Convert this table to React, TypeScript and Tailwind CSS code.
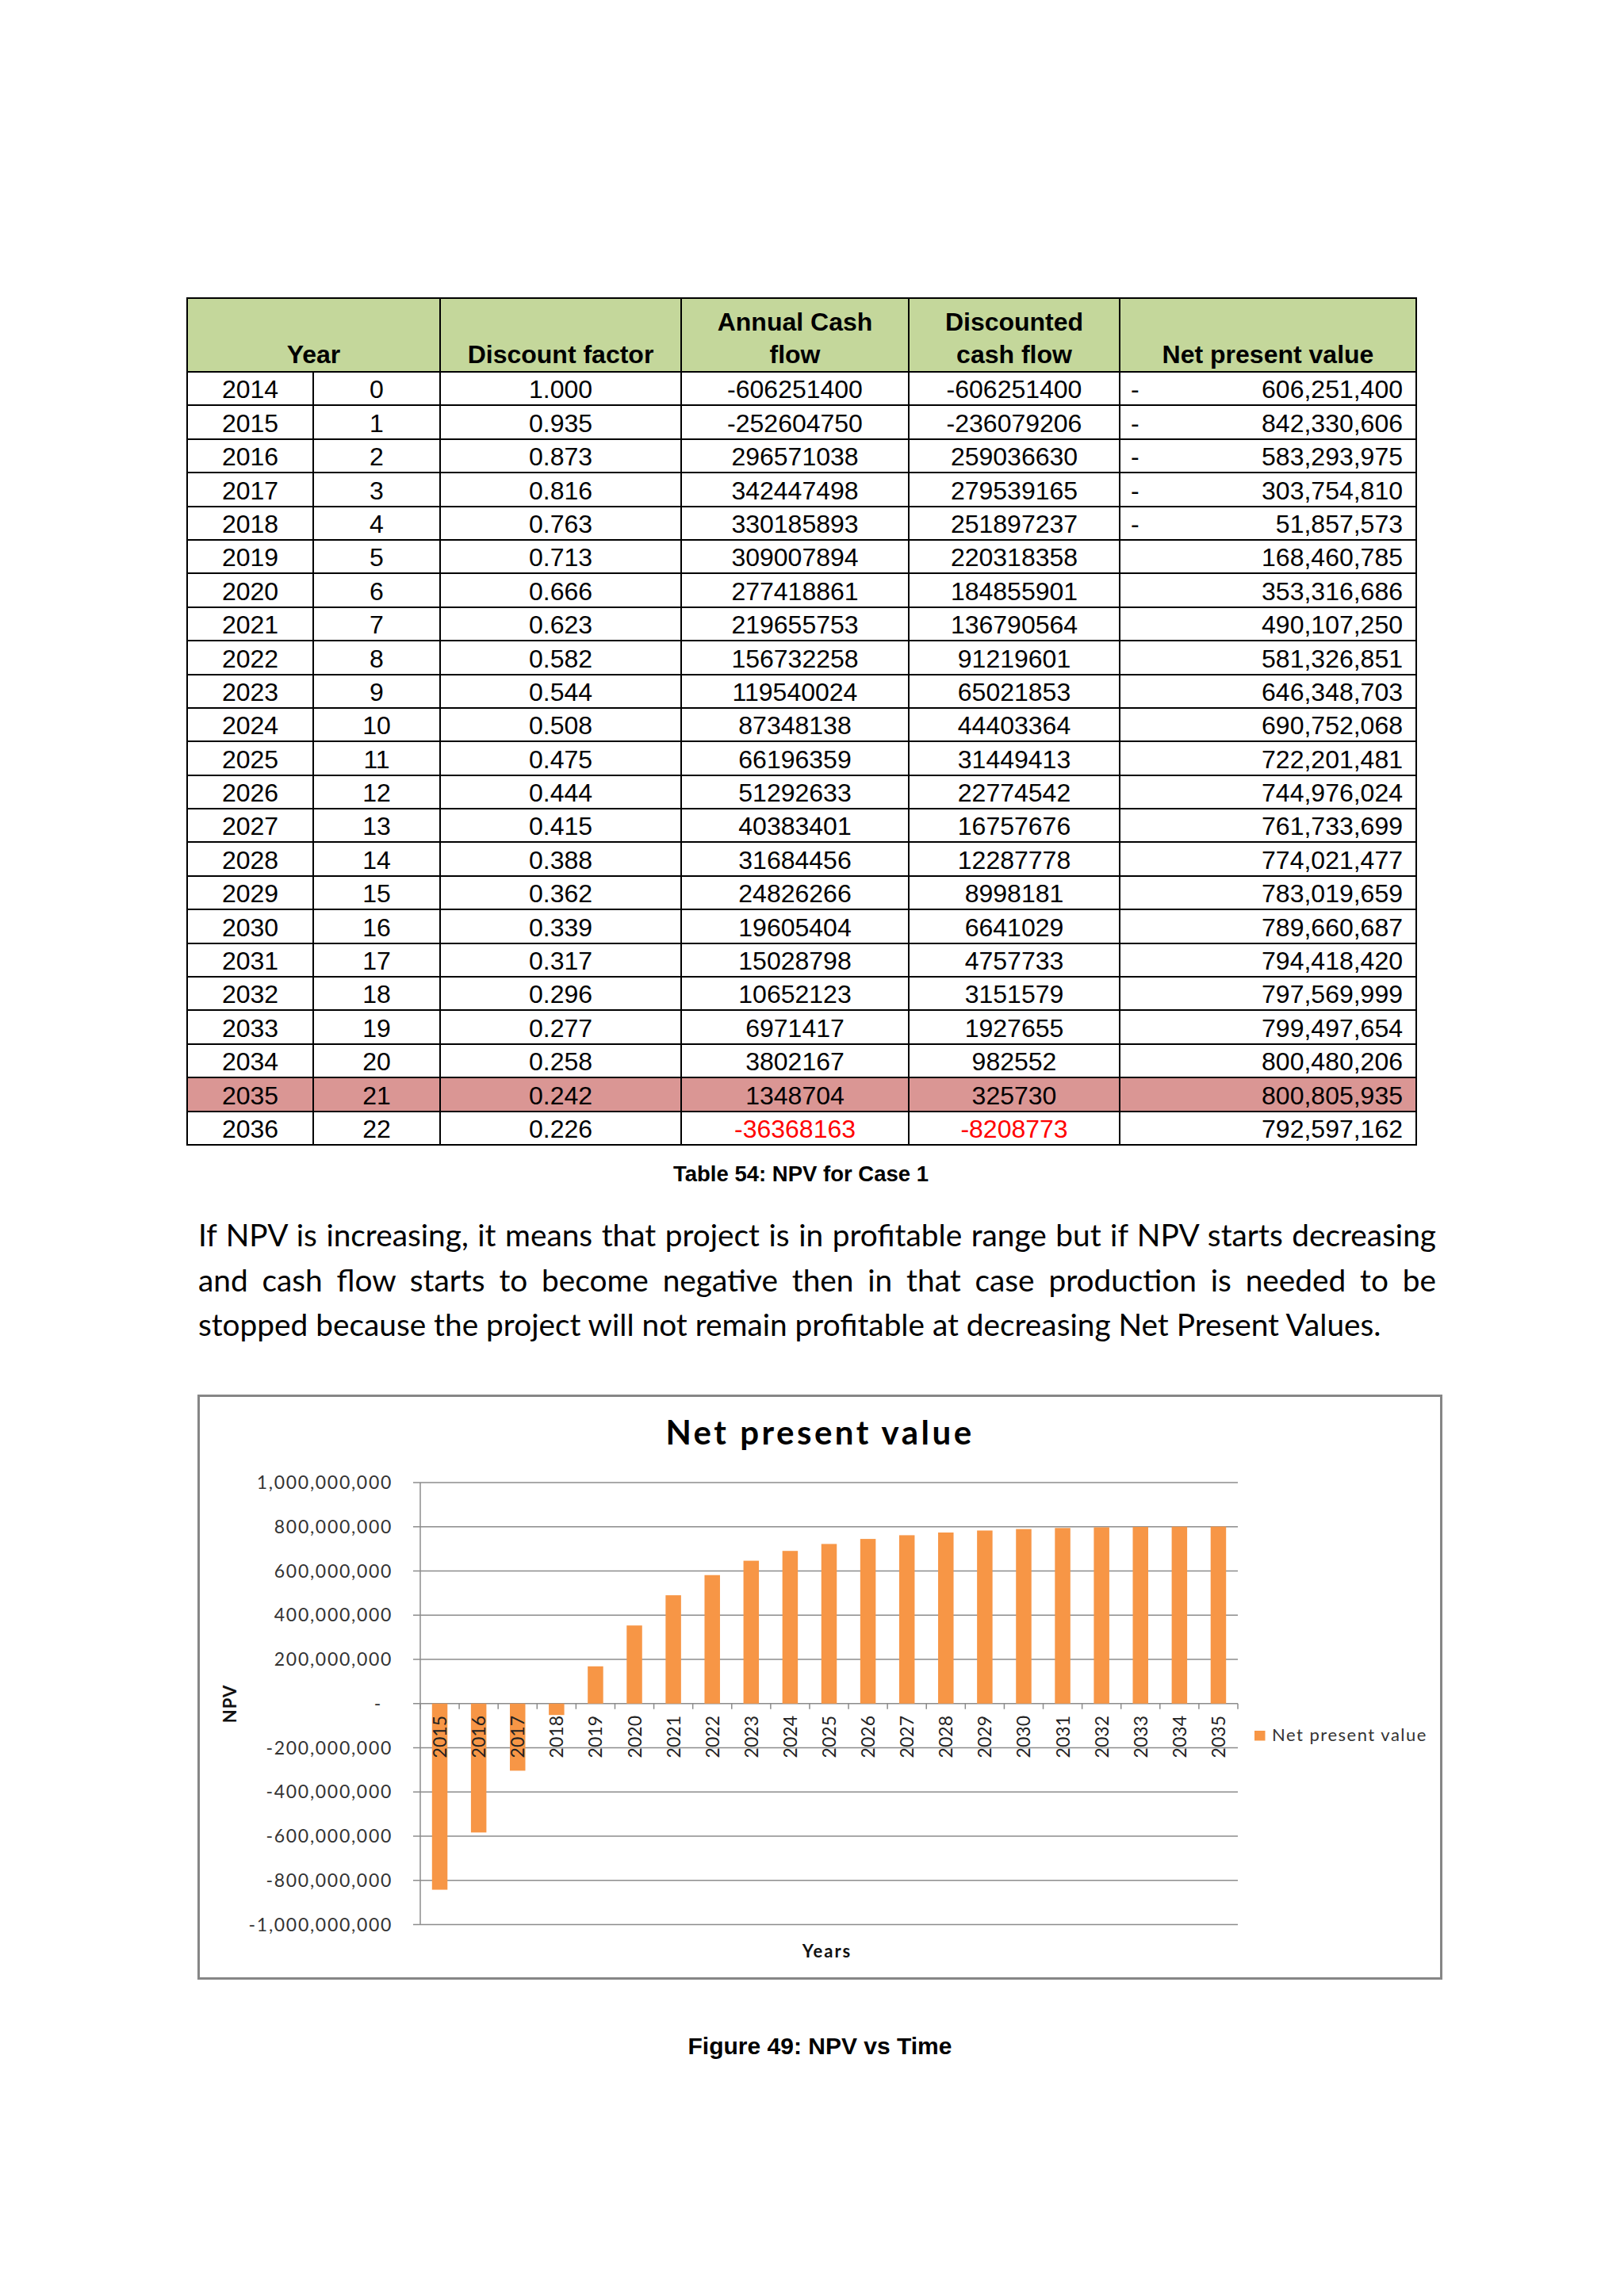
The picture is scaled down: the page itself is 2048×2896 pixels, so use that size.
const rows: [string, string, string, string, string, boolean, string][] = [
  ['2014', '0', '1.000', '-606251400', '-606251400', true, '606,251,400'],
  ['2015', '1', '0.935', '-252604750', '-236079206', true, '842,330,606'],
  ['2016', '2', '0.873', '296571038', '259036630', true, '583,293,975'],
  ['2017', '3', '0.816', '342447498', '279539165', true, '303,754,810'],
  ['2018', '4', '0.763', '330185893', '251897237', true, '51,857,573'],
  ['2019', '5', '0.713', '309007894', '220318358', false, '168,460,785'],
  ['2020', '6', '0.666', '277418861', '184855901', false, '353,316,686'],
  ['2021', '7', '0.623', '219655753', '136790564', false, '490,107,250'],
  ['2022', '8', '0.582', '156732258', '91219601', false, '581,326,851'],
  ['2023', '9', '0.544', '119540024', '65021853', false, '646,348,703'],
  ['2024', '10', '0.508', '87348138', '44403364', false, '690,752,068'],
  ['2025', '11', '0.475', '66196359', '31449413', false, '722,201,481'],
  ['2026', '12', '0.444', '51292633', '22774542', false, '744,976,024'],
  ['2027', '13', '0.415', '40383401', '16757676', false, '761,733,699'],
  ['2028', '14', '0.388', '31684456', '12287778', false, '774,021,477'],
  ['2029', '15', '0.362', '24826266', '8998181', false, '783,019,659'],
  ['2030', '16', '0.339', '19605404', '6641029', false, '789,660,687'],
  ['2031', '17', '0.317', '15028798', '4757733', false, '794,418,420'],
  ['2032', '18', '0.296', '10652123', '3151579', false, '797,569,999'],
  ['2033', '19', '0.277', '6971417', '1927655', false, '799,497,654'],
  ['2034', '20', '0.258', '3802167', '982552', false, '800,480,206'],
  ['2035', '21', '0.242', '1348704', '325730', false, '800,805,935'],
  ['2036', '22', '0.226', '-36368163', '-8208773', false, '792,597,162'],
];

// NPV per year shown in the chart (2015 - 2035)
const bars = [
  -842330606, -583293975, -303754810, -51857573, 168460785, 353316686, 490107250,
  581326851, 646348703, 690752068, 722201481, 744976024, 761733699, 774021477,
  783019659, 789660687, 794418420, 797569999, 799497654, 800480206, 800805935,
];

const yTicks = [
  '1,000,000,000', '800,000,000', '600,000,000', '400,000,000', '200,000,000', '-',
  '-200,000,000', '-400,000,000', '-600,000,000', '-800,000,000', '-1,000,000,000',
];

function NpvTable() {
  const cell = 'border-2 border-black align-bottom p-0 leading-[37px]';
  const head = 'border-2 border-black align-bottom p-0 font-bold leading-[41px] text-center';
  return (
    <table className="ml-[235px] w-[1550px] table-fixed border-collapse font-['Liberation_Sans',Arial,sans-serif] text-[32px] text-black">
      <colgroup>
        <col className="w-[159px]" />
        <col className="w-[160px]" />
        <col className="w-[304px]" />
        <col className="w-[287px]" />
        <col className="w-[266px]" />
        <col className="w-[374px]" />
      </colgroup>
      <thead>
        <tr className="h-[93px] bg-[#c4d79b]">
          <th colSpan={2} className={head}>Year</th>
          <th className={head}>Discount factor</th>
          <th className={head}>
            Annual Cash
            <br />
            flow
          </th>
          <th className={head}>
            Discounted
            <br />
            cash flow
          </th>
          <th className={head}>Net present value</th>
        </tr>
      </thead>
      <tbody>
        {rows.map(([yr, n, df, acf, dcf, neg, npv]) => {
          const hi = yr === '2035';
          const red = yr === '2036';
          return (
            <tr key={yr} className={`h-[42.4px] ${hi ? 'bg-[#da9694]' : ''}`}>
              <td className={`${cell} text-center`}>{yr}</td>
              <td className={`${cell} text-center`}>{n}</td>
              <td className={`${cell} text-center`}>{df}</td>
              <td className={`${cell} text-center ${red ? 'text-[#ff0000]' : ''}`}>{acf}</td>
              <td className={`${cell} text-center ${red ? 'text-[#ff0000]' : ''}`}>{dcf}</td>
              <td className={cell}>
                <div className="flex justify-between pl-[13px] pr-[16px]">
                  <span>{neg ? '-' : ''}</span>
                  <span>{npv}</span>
                </div>
              </td>
            </tr>
          );
        })}
      </tbody>
    </table>
  );
}

function NpvChart() {
  const x0 = 530;
  const x1 = 1561;
  const cw = (x1 - x0) / 21;
  const top = 1868;
  const step = 55.75;
  const zero = top + step * 5;
  const scale = step / 200000000;
  const grid = '#8c8c8c';

  return (
    <div className="ml-[249px] mt-[60px] h-[738px] w-[1570px] border-[3px] border-[#868686] bg-white">
      <div className="h-[80px] pt-[23px] text-center font-['Lato',sans-serif] text-[42px] font-bold leading-[42px] tracking-[3.5px] text-black">
        Net present value
      </div>
      <svg width={1564} height={652} viewBox="252 1840 1564 652" className="block font-['Lato',sans-serif]">
        {yTicks.map((label, i) => {
          const y = top + i * step;
          return (
            <g key={label}>
              <line x1={521} x2={x1} y1={y} y2={y} stroke={grid} strokeWidth={1.5} />
              <text
                x={label === '-' ? 482 : 495}
                y={y + 8}
                textAnchor="end"
                fontSize={23}
                letterSpacing={1.7}
                fill="#333"
              >
                {label}
              </text>
            </g>
          );
        })}
        <line x1={x0} x2={x0} y1={top} y2={top + step * 10} stroke={grid} strokeWidth={1.5} />
        {Array.from({ length: 22 }, (_, k) => (
          <line key={k} x1={x0 + k * cw} x2={x0 + k * cw} y1={zero} y2={zero + 7} stroke={grid} strokeWidth={1.5} />
        ))}
        {bars.map((v, k) => {
          const cx = x0 + (k + 0.5) * cw;
          const h = Math.abs(v) * scale;
          return (
            <rect key={k} x={cx - 9.75} width={19.5} y={v >= 0 ? zero - h : zero} height={h} fill="#f79646" />
          );
        })}
        {bars.map((_, k) => {
          const cx = x0 + (k + 0.5) * cw + 8.5;
          return (
            <text
              key={k}
              x={cx}
              y={2162}
              transform={`rotate(-90 ${cx} 2162)`}
              textAnchor="end"
              fontSize={23}
              fill="#222"
            >
              {2015 + k}
            </text>
          );
        })}
        <text x={298} y={2147} transform="rotate(-90 298 2147)" textAnchor="middle" fontSize={22} fontWeight={700} letterSpacing={1} fill="#111">
          NPV
        </text>
        <text x={1043} y={2467} textAnchor="middle" fontSize={22} fontWeight={700} letterSpacing={2} fill="#111">
          Years
        </text>
        <rect x={1582} y={2181} width={13.5} height={12.5} fill="#f79646" />
        <text x={1604} y={2194} fontSize={22} letterSpacing={1.5} fill="#333">
          Net present value
        </text>
      </svg>
    </div>
  );
}

export default function App() {
  const line = 'block text-justify [text-align-last:justify]';
  return (
    <div className="h-[2896px] w-[2048px] overflow-hidden bg-white pt-[375px]">
      <NpvTable />

      <p className="ml-[235px] mt-[20px] w-[1550px] text-center font-['Liberation_Sans',Arial,sans-serif] text-[27.5px] font-bold leading-[31px] text-black">
        Table 54: NPV for Case 1
      </p>

      <p className="ml-[250px] mt-[33px] w-[1561px] font-['Lato',sans-serif] text-[38.8px] leading-[56.7px] text-black">
        <span className={line}>
          If NPV is increasing, it means that project is in profitable range but if NPV starts decreasing
        </span>
        <span className={line}>
          and cash flow starts to become negative then in that case production is needed to be
        </span>
        <span className="block">
          stopped because the project will not remain profitable at decreasing Net Present Values.
        </span>
      </p>

      <NpvChart />

      <p className="ml-[249px] mt-[67px] w-[1570px] text-center font-['Liberation_Sans',Arial,sans-serif] text-[30px] font-bold leading-[34px] text-black">
        Figure 49: NPV vs Time
      </p>
    </div>
  );
}
